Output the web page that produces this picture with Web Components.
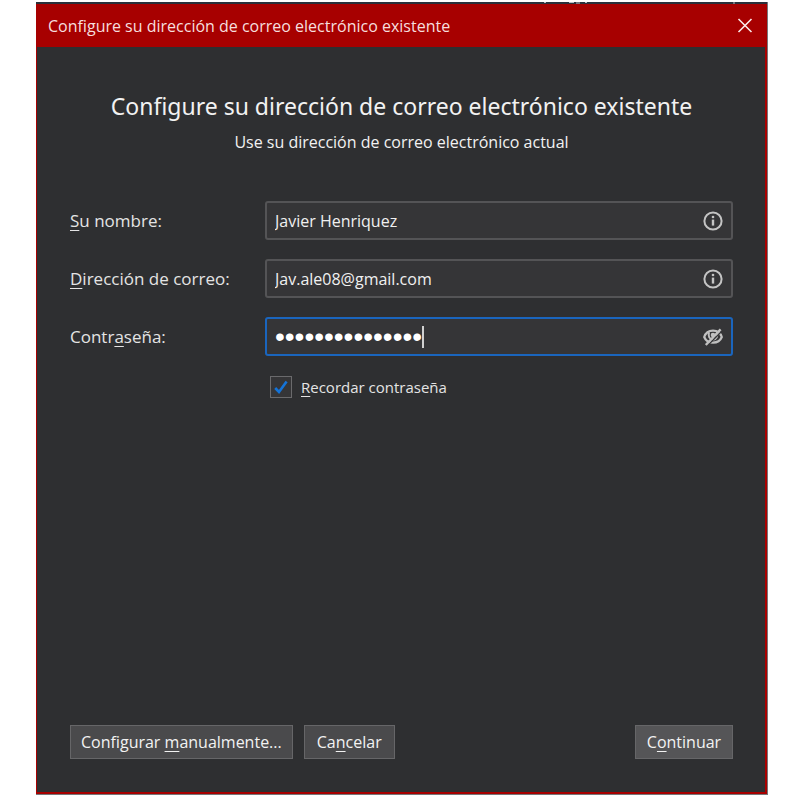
<!DOCTYPE html>
<html lang="es">
<head>
<meta charset="utf-8">
<title>Configure su dirección de correo electrónico existente</title>
<style>
  body { margin: 0; min-height: 100vh; display: flex; background: #fff; font-family: "Open Sans", "Noto Sans", sans-serif; }
  u { text-underline-offset: 3px; text-decoration-thickness: 1px; text-decoration-skip-ink: none; }
</style>
</head>
<body>
<mail-dialog>
  <span slot="caption">Configure su dirección de correo electrónico existente</span>
  <dialog-intro>
    <span slot="title">Configure su dirección de correo electrónico existente</span>
    <span slot="note">Use su dirección de correo electrónico actual</span>
  </dialog-intro>
  <form-field value="Javier Henriquez"><span><u>S</u>u nombre:</span><info-icon slot="icon"></info-icon></form-field>
  <form-field value="Jav.ale08@gmail.com" type="email"><span><u>D</u>irección de correo:</span><info-icon slot="icon"></info-icon></form-field>
  <form-field value="contrasena12345" type="password" active><span>Contr<u>a</u>seña:</span><hidden-icon slot="icon"></hidden-icon></form-field>
  <check-option><u>R</u>ecordar contraseña</check-option>
  <push-button slot="left">Configurar <u>m</u>anualmente...</push-button>
  <push-button slot="left">Ca<u>n</u>celar</push-button>
  <push-button slot="right" primary>C<u>o</u>ntinuar</push-button>
</mail-dialog>

<script>
const define = (name, html, setup) => customElements.define(name, class extends HTMLElement {
  constructor() {
    super();
    this.attachShadow({ mode: 'open' }).innerHTML = html;
  }
  connectedCallback() { if (setup) setup(this, this.shadowRoot); }
});

define('info-icon', `
<style>:host{display:block;width:20px;height:20px;color:#c4c4c4} svg{display:block}</style>
<svg width="20" height="20" viewBox="0 0 20 20" fill="none" stroke="currentColor" aria-hidden="true">
  <circle cx="10" cy="10" r="8.6" stroke-width="2"/>
  <path d="M10 8.6v6" stroke-width="2.4"/><circle cx="10" cy="6" r="1.3" fill="currentColor" stroke="none"/>
</svg>`);

define('hidden-icon', `
<style>:host{display:block;width:20px;height:20px;color:#c0c0c0} svg{display:block}</style>
<svg width="20" height="20" viewBox="0 0 20 20" fill="none" stroke="currentColor" stroke-width="2.200" aria-hidden="true">
  <path d="M1.200 10C2.600 5.800 6 3.600 10 3.600s7.400 2.200 8.800 6.400C17.200 14 14 15.600 10 15.600S2.800 14 1.200 10Z"/>
  <path d="M6 5.200c-1 4 .4 7.300 4 7.500 3.600-.2 5-3.500 4-7.500" stroke-width="2"/>
  <circle cx="10" cy="8" r="2.300" fill="currentColor" stroke="none"/>
  <path d="M4.600 18.400 19.400 3.400" stroke="#353537" stroke-width="1.400"/>
  <path d="M2.800 18 17.600 2.400" stroke-width="2.400"/>
</svg>`);

define('dialog-intro', `
<style>
:host{display:block;text-align:center;color:#f2f2f2}
h1{margin:0;font:400 23px/32px "Noto Sans","Open Sans",sans-serif}
p{margin:8px 0 0;font-size:16px;line-height:24px}
</style>
<h1><slot name="title"></slot></h1><p><slot name="note"></slot></p>`);

define('form-field', `
<style>
:host{display:grid;grid-template-columns:5fr 12fr;align-items:center;color:#e4e4e4}
label{font-size:17px;line-height:24px}
.box{box-sizing:border-box;height:39px;display:flex;align-items:center;padding:0 8px;border:2px solid #545456;border-radius:3px;background:#353537}
:host([active]) .box{border-color:#1a65bd}
input{flex:1;min-width:0;padding:0;border:0;outline:0;background:none;color:#f0f0f0;font:16px/24px "Open Sans",sans-serif}
:host([active]) input{flex:none;field-sizing:content;color:#fff}
input[type=password]{font-family:"Liberation Sans",sans-serif;font-size:28px}
.caret{display:none;width:2px;height:22px;background:#d0d0d0}
:host([active]) .caret{display:block}
slot[name=icon]{display:block;margin-left:auto}
</style>
<label for="f"><slot></slot></label>
<div class="box"><input id="f"><span class="caret"></span><slot name="icon"></slot></div>`,
(host, root) => {
  const input = root.querySelector('input');
  input.type = host.getAttribute('type') || 'text';
  input.value = host.getAttribute('value');
});

define('check-option', `
<style>
:host{display:grid;grid-template-columns:5fr 12fr;color:#e4e4e4;font-size:15px;line-height:24px}
label{grid-column:2;display:flex;align-items:center;gap:9px;padding-left:5px}
.tick{display:grid;width:22px;height:22px}
input,svg{grid-area:1/1;margin:0}
input{appearance:none;box-sizing:border-box;width:22px;height:22px;border:1px solid #6a6a6c;background:#353537}
svg{pointer-events:none;visibility:hidden} input:checked + svg{visibility:visible}
</style>
<label><span class="tick"><input type="checkbox" checked>
<svg width="22" height="22" viewBox="0 0 22 22" fill="none" stroke="#1473d8" stroke-width="2.600" aria-hidden="true"><path d="M5.200 12 9 16 16.600 5.400"/></svg></span><span><slot></slot></span></label>`);

define('push-button', `
<style>
:host{display:block}
button{box-sizing:border-box;min-width:91px;height:34px;padding:0 10px;border:1px solid #666668;background:#4a4a4c;color:#f2f2f2;font:16px/24px "Open Sans",sans-serif;white-space:nowrap}
:host([primary]) button{min-width:98px;background:#555557}
</style>
<button type="button"><slot></slot></button>`);

define('mail-dialog', `
<style>
:host{flex:1;margin:2px 32px 5px 36px;display:flex;flex-direction:column;border-right:1px solid #77777a;border-bottom:1px solid #77777a;background:#2e2f31}
.edge{display:block;width:100%;height:2px;background:#2a303a}
header{display:flex;align-items:center;justify-content:space-between;height:43px;padding:0 12px;background:#a70000;color:#f6dede;font-size:16px}
.close{padding:0;border:0;background:none;color:#fbeaea;width:20px;height:20px}
.close svg{display:block}
main{flex:1;display:flex;flex-direction:column;gap:19px;padding:43px 32px 33px 33px;border:solid #a70000;border-width:0 2px 2px 1px}
::slotted(dialog-intro){margin-bottom:28px}
footer{display:flex;gap:11px;margin-top:auto}
.right{margin-left:auto}
</style>
<svg class="edge" aria-hidden="true"><path d="M508 .5h2M533 .5h5M540 1h4M549 .5h2M697 1h2" stroke="#b8bcc4" fill="none"/></svg>
<header><slot name="caption"></slot>
<button class="close" type="button" aria-label="Cerrar"><svg width="20" height="20" viewBox="0 0 20 20" stroke="currentColor" stroke-width="1.600" aria-hidden="true"><path d="M3.500 3 16.500 16M16.500 3 3.500 16"/></svg></button></header>
<main><slot></slot><footer><slot name="left"></slot><span class="right"><slot name="right"></slot></span></footer></main>`);
</script>
</body>
</html>
